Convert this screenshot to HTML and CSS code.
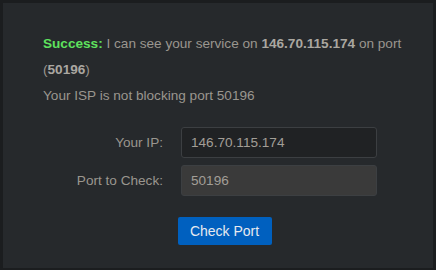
FILE: index.html
```html
<!DOCTYPE html>
<html>
<head>
<meta charset="utf-8">
<link rel="stylesheet" href="styles.css">
</head>
<body>
<div class="panel">
  <p class="msg"><span class="ok">Success:</span> I can see your service on <b>146.70.115.174</b> on port (<b>50196</b>)</p>
  <p class="msg">Your ISP is not blocking port 50196</p>
  <form class="form">
    <label class="lbl" for="ip">Your IP:</label>
    <input class="field" id="ip" type="text" value="146.70.115.174">
    <label class="lbl" for="port">Port to Check:</label>
    <input class="field ro" id="port" type="text" value="50196" readonly>
    <div class="actions"><button class="btn" type="button">Check Port</button></div>
  </form>
</div>
</body>
</html>
```
FILE: styles.css
```css
html, body {
  margin: 0;
  padding: 0;
  background: #1b1d1f;
}
body {
  padding: 3px;
  font-family: "Liberation Sans", Arial, sans-serif;
  font-size: 13.6px;
  color: #9a968f;
}
.panel {
  background: #26292c;
  height: 265px;
  box-sizing: border-box;
  padding: 28px 25px 25px 40px;
}
.msg {
  margin: 0;
  line-height: 26px;
}
.msg b {
  color: #aaa7a1;
}
.ok {
  color: #5ee25e;
  font-weight: bold;
}
.form {
  margin: 18px 0 0 0;
  display: grid;
  grid-template-columns: 120px 196px;
  column-gap: 18px;
  row-gap: 7px;
  align-items: center;
}
.lbl {
  text-align: right;
  color: #9a968f;
}
.field {
  box-sizing: border-box;
  width: 196px;
  height: 31px;
  margin: 0;
  padding: 0 9px;
  background: #202224;
  border: 1px solid #3c3f42;
  border-radius: 3px;
  color: #a29e97;
  font-family: "Liberation Sans", Arial, sans-serif;
  font-size: 13.6px;
  outline: none;
}
.field.ro {
  background: #3a3a3a;
}
.actions {
  grid-column: 1 / -1;
  display: flex;
  justify-content: center;
  margin-top: 14px;
  padding-left: 29px;
}
.btn {
  width: 94px;
  height: 28px;
  background: #0060bf;
  border: none;
  border-radius: 2px;
  color: #e6eaf0;
  font-family: "Liberation Sans", Arial, sans-serif;
  font-size: 14px;
  padding: 0;
}
```
